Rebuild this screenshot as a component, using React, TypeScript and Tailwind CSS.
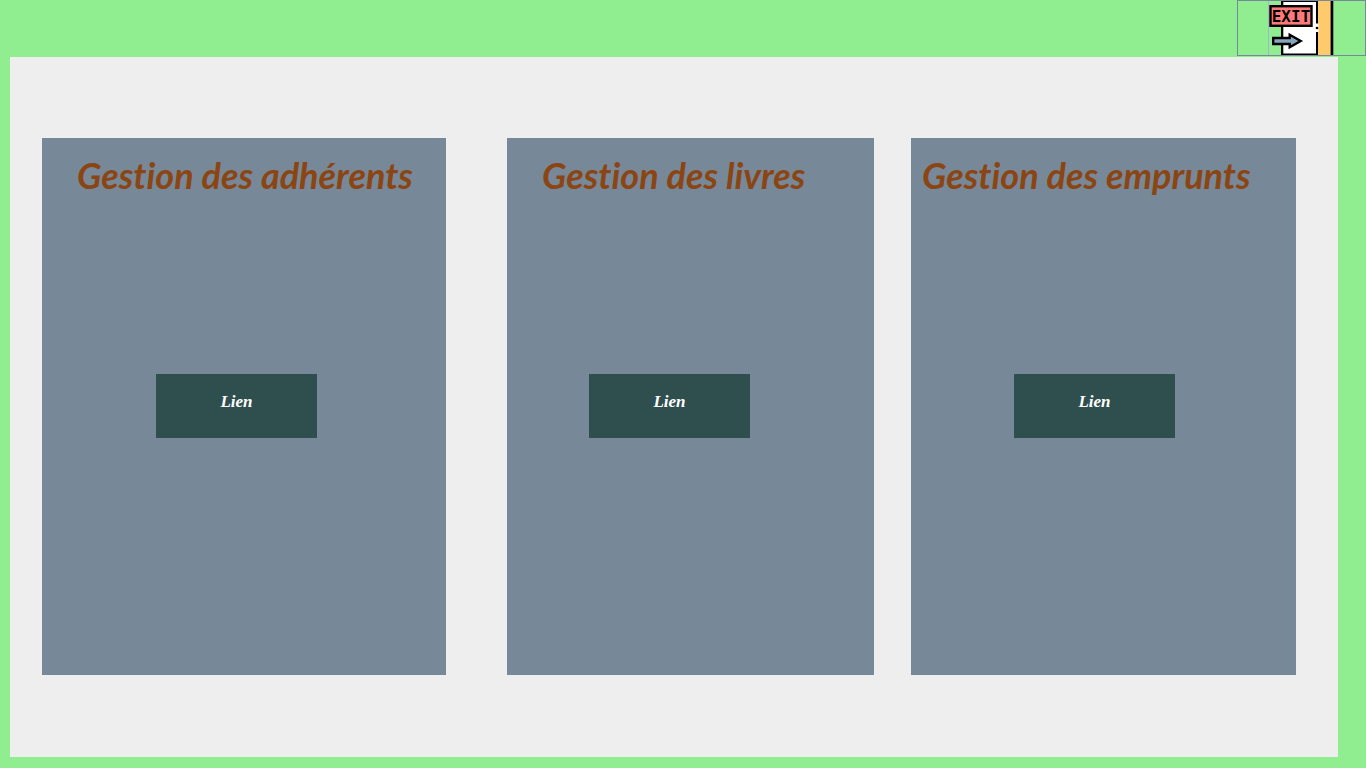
type Section = {
  title: string;
  card: string;
  heading: string;
  link: string;
};

const sections: Section[] = [
  { title: "Gestion des adhérents", card: "grow-[404]", heading: "pl-[35px]", link: "ml-[114px]" },
  { title: "Gestion des livres", card: "ml-[61px] grow-[367]", heading: "pl-[35px]", link: "ml-[82px]" },
  { title: "Gestion des emprunts", card: "ml-[37px] grow-[385]", heading: "pl-[11px]", link: "ml-[103px]" },
];

function ExitIcon() {
  return (
    <svg width="68" height="54" viewBox="0 0 68 54" aria-hidden="true">
      <rect x="0" y="0" width="1" height="54" fill="#a3b3d0" />
      <rect x="13" y="0" width="37" height="54" fill="#000" />
      <rect x="15.300" y="1" width="32.700" height="51.500" fill="#fff" />
      <rect x="50" y="0" width="13" height="54" fill="#ffca6b" />
      <path d="M47.500 22.500h3v8.500h-3z" fill="#fff" />
      <circle cx="49" cy="27" r="1.300" fill="#000" />
      <rect x="62.600" y="0" width="2.700" height="54" fill="#000" />
      <rect x="2.500" y="5.200" width="41" height="19.600" fill="#ff7979" stroke="#000" strokeWidth="2.400" />
      <text
        x="23"
        y="21"
        textAnchor="middle"
        fontSize="16"
        fontWeight="700"
        fontFamily="'DejaVu Sans Mono', monospace"
        fill="#000"
      >
        EXIT
      </text>
      <path
        d="M5.200 37h16.500v-3.300l11 6.300-11 6.300V43H5.200z"
        fill="#87a5bd"
        stroke="#000"
        strokeWidth="2.400"
      />
    </svg>
  );
}

export default function App() {
  return (
    <div className="flex min-h-screen flex-col bg-[#90ee90] pb-[11px]">
      <header className="flex h-[57px] items-start justify-end">
        <button
          type="button"
          aria-label="Quitter"
          className="flex h-14 w-[129px] cursor-pointer items-center border border-[#778899] pl-[30px]"
        >
          <ExitIcon />
        </button>
      </header>
      <main className="mr-7 ml-2.5 flex grow bg-[#eeeeee] pt-[81px] pr-[42px] pb-[82px] pl-8">
        {sections.map((section) => (
          <section
            key={section.title}
            className={`flex min-w-0 basis-0 flex-col items-start bg-[#778899] pt-4 ${section.card}`}
          >
            <h2
              className={`h-[220px] font-['Lato',sans-serif] text-[36px] leading-[42px] font-bold whitespace-nowrap text-[#8b4513] italic [font-variant-ligatures:none] ${section.heading}`}
            >
              {section.title}
            </h2>
            <button
              type="button"
              className={`h-16 w-[161px] cursor-pointer bg-[#2f4f4f] pb-2 font-['Liberation_Serif',serif] text-[17px] font-bold text-white italic ${section.link}`}
            >
              Lien
            </button>
          </section>
        ))}
      </main>
    </div>
  );
}
